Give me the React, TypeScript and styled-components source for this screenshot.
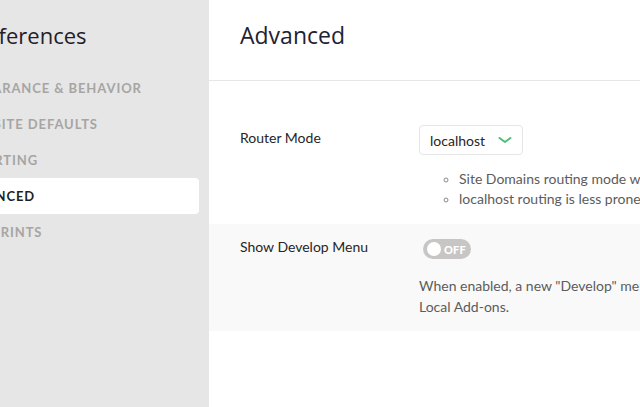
import React from "react";
import styled, { createGlobalStyle } from "styled-components";

const Global = createGlobalStyle`
  html, body { margin: 0; padding: 0; overflow: hidden; background: #fff; }
  body { font-family: Lato, "Liberation Sans", sans-serif; -webkit-font-smoothing: antialiased; }
  * { box-sizing: border-box; }
`;

const Frame = styled.div`
  display: flex;
  width: 640px;
  height: 407px;
  overflow: hidden;
`;

const Sidebar = styled.aside`
  flex: 0 0 275px;
  margin-left: -66px;
  padding: 0 10px;
  background: #e6e6e6;
  display: flex;
  flex-direction: column;
`;

const SideTitle = styled.h1`
  margin: 0;
  height: 70px;
  padding: 20px 0 0 20px;
  font-family: "Open Sans", "Noto Sans", sans-serif;
  font-weight: 400;
  font-size: 22px;
  line-height: 30px;
  color: #1f2026;
`;

const NavList = styled.nav`
  display: flex;
  flex-direction: column;
`;

const NavItem = styled.div<{ $active?: boolean }>`
  height: 36px;
  display: flex;
  align-items: center;
  padding: 0 12px;
  border-radius: 4px;
  font-size: 13px;
  font-weight: 700;
  letter-spacing: 0.9px;
  text-transform: uppercase;
  white-space: nowrap;
  color: ${(p) => (p.$active ? "#1f1f1f" : "#a6a5a4")};
  background: ${(p) => (p.$active ? "#ffffff" : "transparent")};
`;

const Main = styled.main`
  flex: 0 0 760px;
  background: #fff;
  display: flex;
  flex-direction: column;
`;

const Header = styled.header`
  height: 81px;
  padding: 19px 31px 0;
  border-bottom: 1px solid #e6e6e6;
`;

const Heading = styled.h2`
  margin: 0;
  font-family: "Open Sans", "Noto Sans", sans-serif;
  font-weight: 400;
  font-size: 23px;
  line-height: 32px;
  color: #1f2230;
`;

const Setting = styled.section<{ $shaded?: boolean; $pad: string }>`
  display: grid;
  grid-template-columns: 179px 1fr;
  padding: ${(p) => p.$pad};
  background: ${(p) => (p.$shaded ? "#f9f9f9" : "#fff")};
`;

const Label = styled.div<{ $offset: number }>`
  margin-top: ${(p) => p.$offset}px;
  font-size: 14px;
  line-height: 20px;
  color: #262626;
`;

const Control = styled.div`
  display: flex;
  flex-direction: column;
  align-items: flex-start;
`;

const Select = styled.div`
  height: 30px;
  display: flex;
  align-items: center;
  gap: 13px;
  padding: 0 10px;
  border: 1px solid #e5e5e5;
  border-radius: 4px;
  background: #fff;
  font-size: 14px;
  color: #262626;
`;

const Bullets = styled.ul`
  margin: 14px 0 0;
  padding-left: 40px;
  list-style: circle;
  font-size: 14px;
  line-height: 20px;
  color: #5c5c5c;
  white-space: nowrap;
  li::marker { color: #8a8a8a; font-size: 12px; }
`;

const Toggle = styled.div`
  margin: 2px 0 0 4px;
  width: 48px;
  height: 20px;
  border-radius: 10px;
  background: #c8c6c5;
  display: flex;
  align-items: center;
  gap: 3px;
  padding-left: 4px;
`;

const Knob = styled.span`
  width: 14px;
  height: 14px;
  border-radius: 50%;
  background: #fff;
`;

const ToggleText = styled.span`
  font-size: 11px;
  font-weight: 900;
  color: #fff;
  letter-spacing: 0.2px;
`;

const Description = styled.p`
  margin: 16px 0 0;
  font-size: 14px;
  line-height: 21px;
  color: #5c5c5c;
  white-space: nowrap;
`;

const Chevron = () => (
  <svg width="14" height="8" viewBox="0 0 14 8" fill="none">
    <polyline points="1.5,2 7,6 12.5,2" stroke="#51bb7b" strokeWidth="2" strokeLinecap="round" strokeLinejoin="round" />
  </svg>
);

const navItems = ["Appearance & Behavior", "New Site Defaults", "Exporting", "Advanced", "Blueprints"];

export default function App() {
  return (
    <>
      <Global />
      <Frame>
        <Sidebar>
          <SideTitle>Preferences</SideTitle>
          <NavList>
            {navItems.map((n) => (
              <NavItem key={n} $active={n === "Advanced"}>
                {n}
              </NavItem>
            ))}
          </NavList>
        </Sidebar>
        <Main>
          <Header>
            <Heading>Advanced</Heading>
          </Header>
          <Setting $pad="44px 31px 15px">
            <Label $offset={3}>Router Mode</Label>
            <Control>
              <Select>
                <span>localhost</span>
                <Chevron />
              </Select>
              <Bullets>
                <li>Site Domains routing mode will use your computer's hosts file to route sites.</li>
                <li>localhost routing is less prone to issues with VPNs and firewalls.</li>
              </Bullets>
            </Control>
          </Setting>
          <Setting $shaded $pad="13px 31px 14px">
            <Label $offset={0}>Show Develop Menu</Label>
            <Control>
              <Toggle>
                <Knob />
                <ToggleText>OFF</ToggleText>
              </Toggle>
              <Description>
                When enabled, a new "Develop" menu will appear with tools for building
                <br />
                Local Add-ons.
              </Description>
            </Control>
          </Setting>
        </Main>
      </Frame>
    </>
  );
}
